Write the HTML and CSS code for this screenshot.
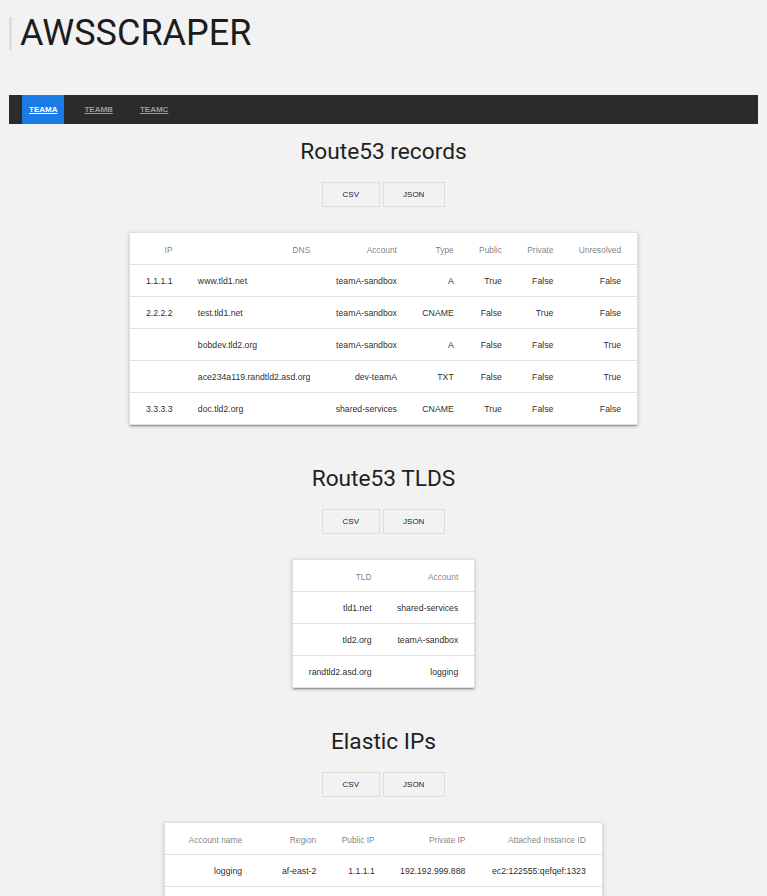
FILE: index.html
```html
<!DOCTYPE html>
<html lang="en">
<head>
<meta charset="utf-8">
<title>AWSSCRAPER</title>
<link rel="stylesheet" href="styles.css">
</head>
<body>
<div class="page">
  <h1 class="brand-title">AWSSCRAPER</h1>
  <nav class="tabs">
    <a class="tab is-active" href="#teama">TEAMA</a>
    <a class="tab" href="#teamb">TEAMB</a>
    <a class="tab" href="#teamc">TEAMC</a>
  </nav>
  <main class="content">
    <section class="panel">
      <h2 class="panel-title">Route53 records</h2>
      <div class="actions">
        <button class="btn">CSV</button>
        <button class="btn">JSON</button>
      </div>
      <table class="data-table">
        <thead>
          <tr><th>IP</th><th>DNS</th><th>Account</th><th>Type</th><th>Public</th><th>Private</th><th>Unresolved</th></tr>
        </thead>
        <tbody>
          <tr><td>1.1.1.1</td><td class="is-text">www.tld1.net</td><td>teamA-sandbox</td><td>A</td><td>True</td><td>False</td><td>False</td></tr>
          <tr><td>2.2.2.2</td><td class="is-text">test.tld1.net</td><td>teamA-sandbox</td><td>CNAME</td><td>False</td><td>True</td><td>False</td></tr>
          <tr><td></td><td class="is-text">bobdev.tld2.org</td><td>teamA-sandbox</td><td>A</td><td>False</td><td>False</td><td>True</td></tr>
          <tr><td></td><td class="is-text">ace234a119.randtld2.asd.org</td><td>dev-teamA</td><td>TXT</td><td>False</td><td>False</td><td>True</td></tr>
          <tr><td>3.3.3.3</td><td class="is-text">doc.tld2.org</td><td>shared-services</td><td>CNAME</td><td>True</td><td>False</td><td>False</td></tr>
        </tbody>
      </table>
    </section>

    <section class="panel">
      <h2 class="panel-title">Route53 TLDS</h2>
      <div class="actions">
        <button class="btn">CSV</button>
        <button class="btn">JSON</button>
      </div>
      <table class="data-table">
        <thead>
          <tr><th>TLD</th><th>Account</th></tr>
        </thead>
        <tbody>
          <tr><td>tld1.net</td><td>shared-services</td></tr>
          <tr><td>tld2.org</td><td>teamA-sandbox</td></tr>
          <tr><td>randtld2.asd.org</td><td>logging</td></tr>
        </tbody>
      </table>
    </section>

    <section class="panel">
      <h2 class="panel-title">Elastic IPs</h2>
      <div class="actions">
        <button class="btn">CSV</button>
        <button class="btn">JSON</button>
      </div>
      <table class="data-table">
        <thead>
          <tr><th>Account name</th><th>Region</th><th>Public IP</th><th>Private IP</th><th>Attached Instance ID</th></tr>
        </thead>
        <tbody>
          <tr><td>logging</td><td>af-east-2</td><td>1.1.1.1</td><td>192.192.999.888</td><td>ec2:122555:qefqef:1323</td></tr>
          <tr><td>teamA-sandbox</td><td>me-central-1</td><td>2.2.2.2</td><td>10.0.0.12</td><td>ec2:122555:abcdef:4411</td></tr>
        </tbody>
      </table>
    </section>
  </main>
</div>
</body>
</html>
```

FILE: styles.css
```css
html, body {
  margin: 0;
  padding: 0;
}

body {
  background: #f2f2f2;
  color: #212121;
  font-family: "Liberation Sans", Arial, Helvetica, sans-serif;
}

.page {
  padding: 0 9px 40px;
}

.brand-title {
  margin: 17px 0 45px;
  padding-left: 8px;
  border-left: 3px solid #dedede;
  font-family: Roboto, "Liberation Sans", sans-serif;
  font-weight: 400;
  font-size: 36px;
  line-height: 33px;
  color: #1c1c1c;
}

.tabs {
  display: flex;
  align-items: stretch;
  gap: 13px;
  height: 29px;
  padding-left: 13px;
  background: #2b2b2b;
}

.tab {
  display: flex;
  align-items: center;
  padding: 0 7px;
  font-size: 8px;
  font-weight: 700;
  color: #9b9b9b;
  text-decoration: underline;
}

.tab.is-active {
  background: #1a7be7;
  color: #ffffff;
}

.content {
  display: flex;
  flex-direction: column;
  gap: 38px;
  padding-top: 12px;
}

.panel {
  display: flex;
  flex-direction: column;
  align-items: center;
}

.panel-title {
  margin: 0;
  font-family: Roboto, "Liberation Sans", sans-serif;
  font-weight: 400;
  font-size: 22.7px;
  line-height: 32px;
  color: #1f1f1f;
}

.actions {
  display: flex;
  gap: 3px;
  margin-top: 14px;
}

.btn {
  height: 25px;
  margin: 0;
  padding: 0 19.5px;
  border: 1px solid #dddddd;
  background: #f2f2f2;
  font-family: "Liberation Sans", Arial, sans-serif;
  font-size: 8px;
  font-weight: 400;
  color: #222222;
  cursor: pointer;
}

.data-table {
  margin-top: 25px;
  border-collapse: separate;
  border-spacing: 0;
  background: #ffffff;
  border: 1px solid rgba(0, 0, 0, 0.12);
  box-shadow: 0 2px 2px 0 rgba(0, 0, 0, 0.14), 0 3px 1px -2px rgba(0, 0, 0, 0.2), 0 1px 5px 0 rgba(0, 0, 0, 0.12);
  white-space: nowrap;
}

.data-table thead tr {
  height: 31px;
}

.data-table tbody tr {
  height: 32px;
}

.data-table th,
.data-table td {
  padding: 0 12.7px;
  text-align: right;
  vertical-align: middle;
}

.data-table th:first-child,
.data-table td:first-child {
  padding-left: 16px;
}

.data-table th:last-child,
.data-table td:last-child {
  padding-right: 16px;
}

.data-table th {
  padding-top: 2px;
  font-size: 8.4px;
  font-weight: 400;
  color: rgba(0, 0, 0, 0.54);
}

.data-table td {
  border-top: 1px solid rgba(0, 0, 0, 0.12);
  font-size: 8.7px;
  color: rgba(0, 0, 0, 0.87);
}

.data-table td.is-text {
  text-align: left;
}
```
